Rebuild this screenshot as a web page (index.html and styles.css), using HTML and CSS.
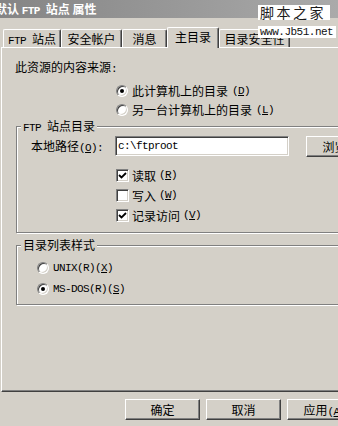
FILE: index.html
```html
<!DOCTYPE html>
<html lang="zh-CN">
<head>
    <meta charset="UTF-8">
    <title>默认 FTP 站点 属性</title>
    <link rel="stylesheet" href="styles.css">
</head>
<body>
    <div class="dialog">
        <div class="titlebar">默认 <span class="en">FTP </span>站点 属性</div>

        <!-- site watermark pasted over the screenshot -->
        <div class="watermark">
            <div class="wm-name">脚本之家</div>
            <div class="wm-url en">www.Jb51.net</div>
        </div>

        <div class="tabs">
            <div class="tab"><span class="en">FTP </span>站点</div>
            <div class="tab">安全帐户</div>
            <div class="tab">消息</div>
            <div class="tab active">主目录</div>
            <div class="tab">目录安全性</div>
        </div>

        <div class="panel">
            <div class="source-label">此资源的内容来源<span class="en">:</span></div>
            <div class="option-list">
                <div class="option"><span class="radio checked"></span>此计算机上的目录<span class="en">(<u>D</u>)</span></div>
                <div class="option"><span class="radio"></span>另一台计算机上的目录<span class="en">(<u>L</u>)</span></div>
            </div>

            <div class="group group-site">
                <div class="group-title"><span class="en">FTP </span>站点目录</div>
                <div class="path-row">
                    <span class="path-label">本地路径<span class="en">(<u>O</u>):</span></span>
                    <div class="textbox en">c:\ftproot</div>
                    <button class="btn btn-browse">浏览<span class="en">(<u>B</u>)</span></button>
                </div>
                <div class="check-list">
                    <div class="check-row"><span class="checkbox checked"><svg width="9" height="9" viewBox="0 0 9 9"><path d="M1 4 L3.5 6.5 L8 2" fill="none" stroke="#000" stroke-width="1.8"/></svg></span>读取<span class="en">(<u>R</u>)</span></div>
                    <div class="check-row"><span class="checkbox"></span>写入<span class="en">(<u>W</u>)</span></div>
                    <div class="check-row"><span class="checkbox checked"><svg width="9" height="9" viewBox="0 0 9 9"><path d="M1 4 L3.5 6.5 L8 2" fill="none" stroke="#000" stroke-width="1.8"/></svg></span>记录访问<span class="en">(<u>V</u>)</span></div>
                </div>
            </div>

            <div class="group group-list">
                <div class="group-title">目录列表样式</div>
                <div class="style-list">
                    <div class="style-row"><span class="radio"></span><span class="en">UNIX(R)(<u>X</u>)</span></div>
                    <div class="style-row"><span class="radio checked"></span><span class="en">MS-DOS(R)(<u>S</u>)</span></div>
                </div>
            </div>
        </div>

        <div class="buttons">
            <button class="btn">确定</button>
            <button class="btn">取消</button>
            <button class="btn">应用<span class="en">(<u>A</u>)</span></button>
        </div>
    </div>
</body>
</html>
```

FILE: styles.css
```css
* {
    margin: 0;
    padding: 0;
    box-sizing: border-box;
}

body {
    width: 338px;
    height: 426px;
    overflow: hidden;
    background: #d4d0c8;
    font-family: "Noto Sans CJK SC", sans-serif;
    font-size: 12px;
    color: #000;
}

.en {
    font-family: "Liberation Mono", monospace;
    font-size: 11px;
    letter-spacing: -0.6px;
}

u {
    text-decoration: underline;
}

.dialog {
    position: relative;
    width: 420px;
    height: 426px;
}

.titlebar {
    height: 18px;
    line-height: 18px;
    text-indent: -5px;
    background: linear-gradient(to right, #858585, #b3b3b3);
    color: #fff;
    font-weight: bold;
    white-space: nowrap;
}

.watermark {
    position: absolute;
    top: 5px;
    left: 258px;
    z-index: 5;
}

.wm-name {
    width: 72px;
    height: 15px;
    line-height: 15px;
    padding-left: 2px;
    background: #fff;
    color: #1a1a1a;
    font-size: 14px;
    letter-spacing: 2.5px;
    white-space: nowrap;
}

.wm-url {
    width: 78px;
    height: 12px;
    line-height: 12px;
    margin-top: 6px;
    padding-left: 2px;
    background: #fff;
    color: #111;
    letter-spacing: -0.5px;
    white-space: nowrap;
}

/* tab strip */
.tabs {
    display: flex;
    align-items: flex-end;
    height: 20px;
    margin-top: 9px;
    padding-left: 3px;
}

.tab {
    height: 18px;
    line-height: 17px;
    text-align: center;
    white-space: nowrap;
    border-top: 1px solid #fff;
    border-left: 1px solid #fff;
    border-right: 1px solid #404040;
    border-radius: 2px 2px 0 0;
    box-shadow: inset -1px 0 0 #808080;
    background: #d4d0c8;
}

.tab:nth-child(1) { width: 58px; }
.tab:nth-child(2) { width: 61px; }
.tab:nth-child(3) { width: 45px; }
.tab:nth-child(4) { width: 52px; }
.tab:nth-child(5) { width: 71px; }

.tab.active {
    height: 21px;
    margin-bottom: -1px;
    padding-bottom: 3px;
    position: relative;
    z-index: 1;
}

/* tab page */
.panel {
    height: 345px;
    margin-left: 1px;
    padding: 11px 20px 0 13px;
    border-top: 1px solid #fff;
    border-left: 1px solid #fff;
    border-bottom: 1px solid #404040;
    border-right: 1px solid #404040;
    box-shadow: inset 0 -1px 0 #808080, inset -1px 0 0 #808080;
}

.source-label {
    line-height: 16px;
}

.option-list {
    margin: 4px 0 0 101px;
}

.option {
    display: flex;
    align-items: center;
    gap: 4px;
    height: 19px;
    white-space: nowrap;
}

.radio {
    display: flex;
    align-items: center;
    justify-content: center;
    flex: none;
    width: 12px;
    height: 12px;
    border-radius: 50%;
    background: #fff;
    border: 1px solid;
    border-color: #808080 #fff #fff #808080;
    box-shadow: inset 1px 1px 0 #404040, inset -1px -1px 0 #d4d0c8;
}

.radio.checked::after {
    content: "";
    width: 4px;
    height: 4px;
    border-radius: 50%;
    background: #000;
}

/* etched group boxes */
.group {
    margin: 7px 0 0 1px;
    border: 1px solid #808080;
    box-shadow: 1px 1px 0 #fff, inset 1px 1px 0 #fff;
}

.group-title {
    width: fit-content;
    margin: -8px 0 0 4px;
    padding: 0 2px;
    line-height: 14px;
    background: #d4d0c8;
    white-space: nowrap;
}

.group-site {
    padding-bottom: 7px;
}

.path-row {
    display: flex;
    align-items: flex-start;
    margin: 1px 0 0 14px;
}

.path-label {
    width: 84px;
    line-height: 20px;
    white-space: nowrap;
}

.textbox {
    width: 174px;
    height: 20px;
    line-height: 18px;
    padding-left: 2px;
    background: #fff;
    border: 1px solid;
    border-color: #808080 #fff #fff #808080;
    box-shadow: inset 1px 1px 0 #404040, inset -1px -1px 0 #d4d0c8;
}

.btn {
    width: 75px;
    height: 21px;
    flex: none;
    background: #d4d0c8;
    font-family: "Noto Sans CJK SC", sans-serif;
    font-size: 12px;
    line-height: 19px;
    color: #000;
    white-space: nowrap;
    border: 1px solid;
    border-color: #fff #404040 #404040 #fff;
    box-shadow: inset -1px -1px 0 #808080;
}

.btn-browse {
    margin-left: 17px;
}

.check-list {
    margin: 7px 0 0 99px;
}

.check-row {
    display: flex;
    align-items: center;
    gap: 3px;
    height: 20px;
    white-space: nowrap;
}

.checkbox {
    display: flex;
    align-items: center;
    justify-content: center;
    flex: none;
    width: 13px;
    height: 13px;
    background: #fff;
    border: 1px solid;
    border-color: #808080 #fff #fff #808080;
    box-shadow: inset 1px 1px 0 #404040, inset -1px -1px 0 #d4d0c8;
}

.group-list {
    margin-top: 12px;
    padding-bottom: 5px;
}

.style-list {
    margin: 5px 0 0 20px;
}

.style-row {
    display: flex;
    align-items: center;
    gap: 4px;
    height: 21px;
}

.buttons {
    display: flex;
    gap: 6px;
    margin-top: 7px;
    padding-left: 125px;
}
```
